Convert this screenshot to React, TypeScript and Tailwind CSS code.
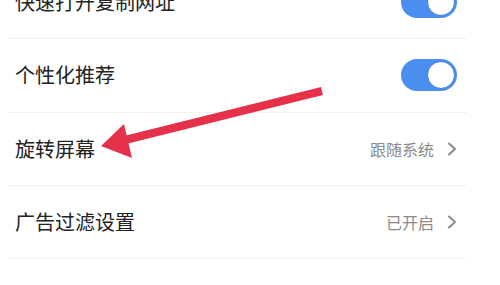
import React from "react";

function Toggle() {
  return (
    <div className="w-[56px] h-[32px] rounded-full bg-[#4a8ef0] flex items-center justify-end pr-[2px]">
      <div className="w-[28px] h-[28px] rounded-full bg-white border border-[#3f7fdc]" />
    </div>
  );
}

function Chevron() {
  return (
    <svg width="10" height="14" viewBox="0 0 10 14" className="ml-[13px]">
      <path d="M2 1.5 L8 7 L2 12.5" fill="none" stroke="#8a8a8a" strokeWidth="2" strokeLinecap="round" strokeLinejoin="round" />
    </svg>
  );
}

function Row({ label, right }: { label: string; right?: React.ReactNode }) {
  return (
    <div className="h-[73.33px] flex items-center justify-between pl-[7px] pr-[10px] border-b border-[#f1f1f1]">
      <span className="text-[20px] text-[#222]">{label}</span>
      {right}
    </div>
  );
}

function Value({ text }: { text: string }) {
  return (
    <div className="flex items-center">
      <span className="text-[16px] text-[#8a8a8a]">{text}</span>
      <Chevron />
    </div>
  );
}

export default function App() {
  return (
    <div
      className="relative w-[500px] h-[285px] overflow-hidden bg-white"
      style={{ fontFamily: '"Noto Sans CJK SC", "Noto Sans", sans-serif' }}
    >
      <div className="mt-[-34px] ml-[8px] w-[459px] flex flex-col">
        <Row label="快速打开复制网址" right={<Toggle />} />
        <Row label="个性化推荐" right={<Toggle />} />
        <Row label="旋转屏幕" right={<Value text="跟随系统" />} />
        <Row label="广告过滤设置" right={<Value text="已开启" />} />
        <Row label="网页字体大小" right={<Value text="标准" />} />
      </div>
      <svg className="absolute left-0 top-0" width="500" height="285" viewBox="0 0 500 285">
        <line x1="125" y1="140" x2="322" y2="91" stroke="#e5324a" strokeWidth="8" />
        <polygon points="101,146 124,124 132,158" fill="#e5324a" />
      </svg>
    </div>
  );
}
